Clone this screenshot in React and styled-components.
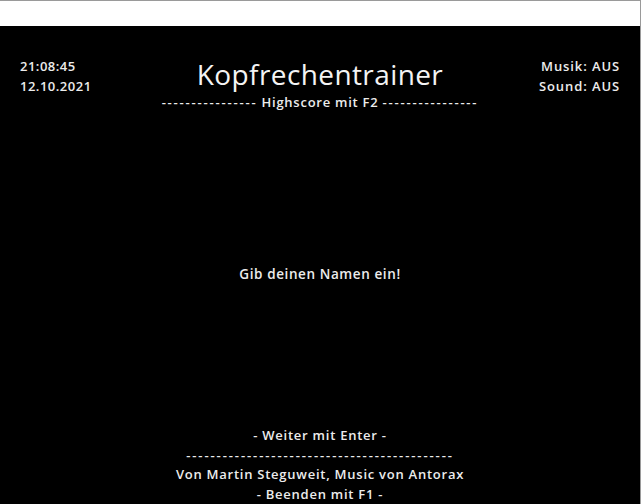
import React from "react";
import styled, { createGlobalStyle } from "styled-components";

const Global = createGlobalStyle`
  html, body { margin: 0; padding: 0; background: #fff; }
  body { font-family: "Open Sans", "Noto Sans", sans-serif; }
`;

const Window = styled.div`
  width: 641px;
  height: 504px;
  display: flex;
  flex-direction: column;
  box-sizing: border-box;
  border-top: 1px solid #9a9a9a;
  border-right: 1px solid #9a9a9a;
  background: #fff;
`;

const TopBar = styled.div`
  height: 25px;
  background: #fff;
  flex: none;
`;

const Screen = styled.div`
  flex: 1;
  background: #000;
  color: #ececec;
  display: flex;
  flex-direction: column;
  font-family: "Open Sans", "Noto Sans", sans-serif;
  font-weight: 600;
`;

const Header = styled.header`
  display: grid;
  grid-template-columns: 1fr auto 1fr;
  padding: 30px 20px 0 20px;
`;

const Info = styled.div`
  display: flex;
  flex-direction: column;
  align-items: ${(p) => (p.$right ? "flex-end" : "flex-start")};
  font-size: 13px;
  line-height: 20px;
  letter-spacing: ${(p) => (p.$right ? "0.9px" : "0.5px")};
`;

const Center = styled.div`
  display: flex;
  flex-direction: column;
  align-items: center;
`;

const Title = styled.h1`
  margin: -1px 0 0 0;
  font-size: 28px;
  font-weight: 500;
  line-height: 38px;
  letter-spacing: 0.4px;
  color: #f4f4f4;
`;

const Line = styled.div`
  font-size: 13px;
  line-height: ${(p) => p.$lh || 19.5}px;
  white-space: pre;
  text-align: center;
  letter-spacing: 0.75px;
`;

const Dashes = styled.span`
  letter-spacing: ${(p) => p.$spacing}px;
`;

const Main = styled.main`
  flex: 1;
  display: flex;
  align-items: center;
  justify-content: center;
  font-size: 13.5px;
  letter-spacing: 0.6px;
  padding-top: 10px;
`;

const Footer = styled.footer`
  display: flex;
  flex-direction: column;
  align-items: center;
`;

const headerDashes = "-".repeat(16);
const footerDashes = "-".repeat(44);

export default function App() {
  return (
    <>
      <Global />
      <Window>
        <TopBar />
        <Screen>
          <Header>
            <Info>
              <span>21:08:45</span>
              <span>12.10.2021</span>
            </Info>
            <Center>
              <Title>Kopfrechentrainer</Title>
              <Line $lh={18}>
                <Dashes $spacing={1.8}>{headerDashes}</Dashes> Highscore mit F2{" "}
                <Dashes $spacing={1.8}>{headerDashes}</Dashes>
              </Line>
            </Center>
            <Info $right>
              <span>Musik: AUS</span>
              <span>Sound: AUS</span>
            </Info>
          </Header>
          <Main>Gib deinen Namen ein!</Main>
          <Footer>
            <Line>- Weiter mit Enter -</Line>
            <Line>
              <Dashes $spacing={1.9}>{footerDashes}</Dashes>
            </Line>
            <Line>Von Martin Steguweit, Music von Antorax</Line>
            <Line>- Beenden mit F1 -</Line>
          </Footer>
        </Screen>
      </Window>
    </>
  );
}
